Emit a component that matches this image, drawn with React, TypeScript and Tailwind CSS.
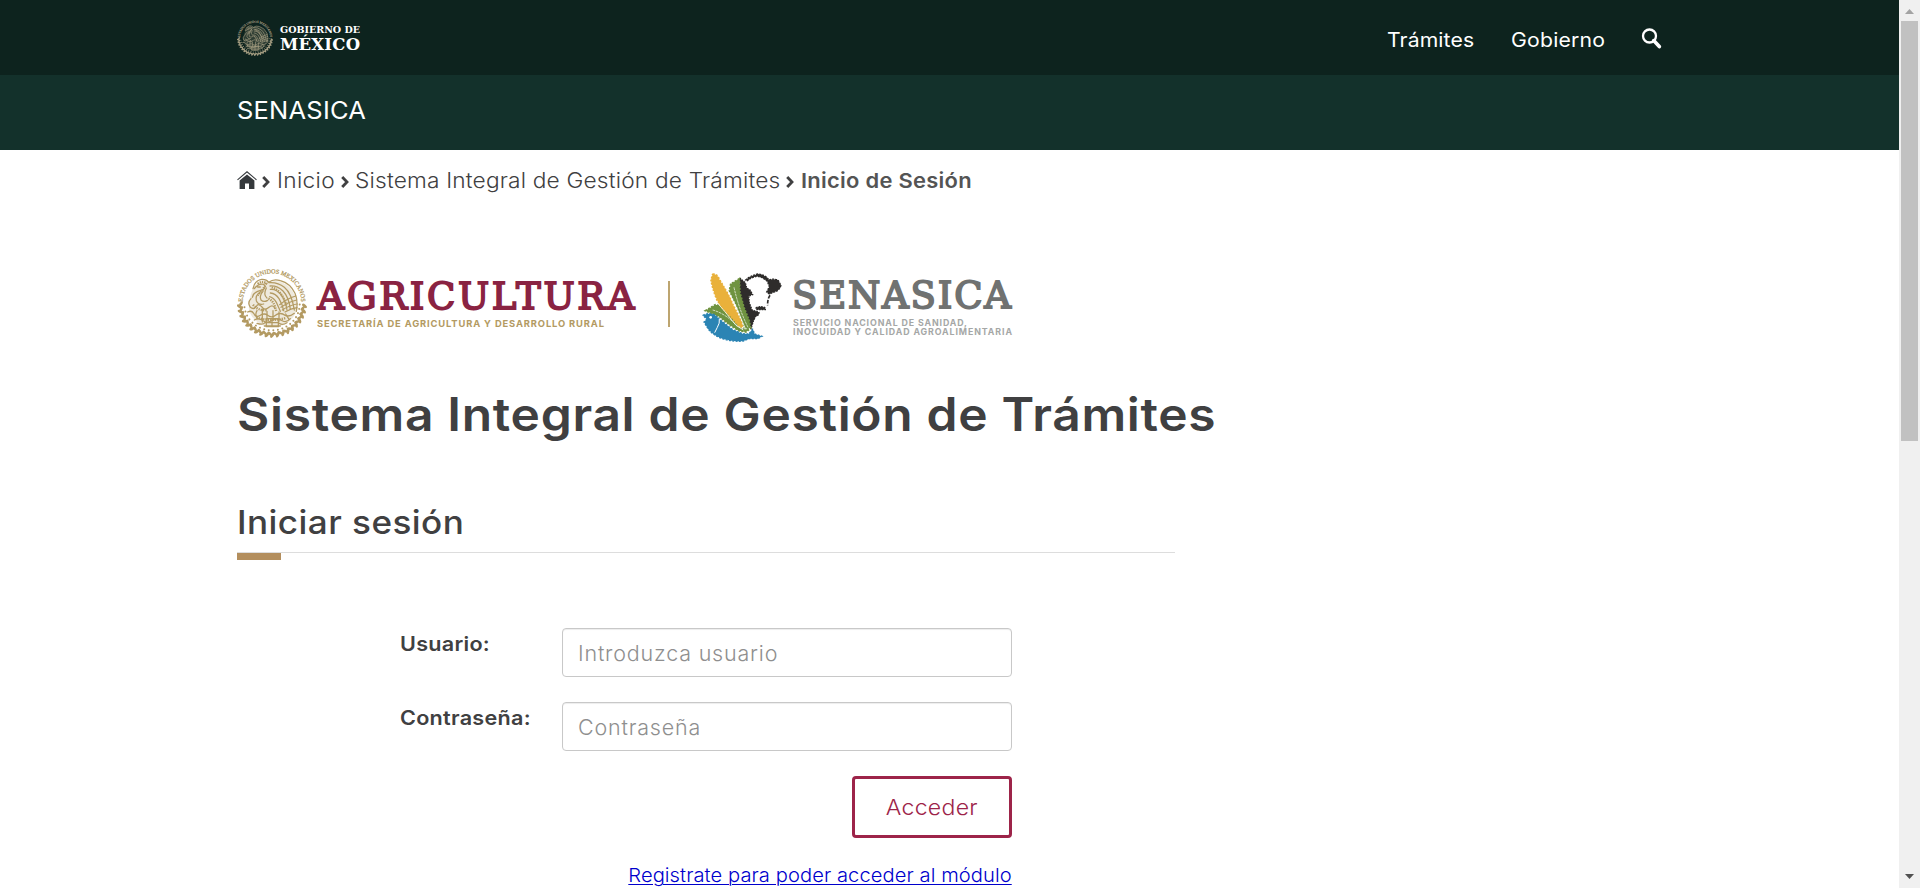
import type { ReactNode } from "react";

function Seal({ className, color, detailed }: { className: string; color: string; detailed?: boolean }) {
  const leaves = Array.from({ length: 19 }, (_, i) => (4 + (172 / 18) * i) * (Math.PI / 180));
  return (
    <svg viewBox="0 0 210 210" className={className} fill="none" stroke={color} aria-hidden="true">
      <defs>
        <path id={detailed ? "ring-lg" : "ring-sm"} d="M18 112 L17 104 A88 88 0 0 1 193 104 L192 112" />
      </defs>
      <text fill={color} stroke={color} strokeWidth="0.8" textAnchor="middle" className="font-['Liberation_Serif'] text-[18.5px]">
        <textPath href={detailed ? "#ring-lg" : "#ring-sm"} startOffset="50%">
          ESTADOS UNIDOS MEXICANOS
        </textPath>
      </text>
      {leaves.map((a, i) => {
        const x = 105 + 92 * Math.cos(a);
        const y = 108 + 88 * Math.sin(a);
        const deg = (a * 180) / Math.PI;
        return (
          <g key={i} transform={`translate(${x} ${y}) rotate(${deg})`} fill={color} stroke="none">
            <ellipse cx="4" cy="-4" rx="9" ry="4.6" transform="rotate(35)" />
            <ellipse cx="-4" cy="5" rx="9" ry="4" transform="rotate(-50)" />
            <circle cx="-9" cy="-4" r="3" />
          </g>
        );
      })}
      <path
        d="M48 62 Q60 34 95 43 Q130 30 160 60 Q184 90 178 130 Q160 176 105 178 Q56 174 36 130 Q34 90 48 62 Z"
        fill={color}
        fillOpacity="0.22"
        stroke="none"
      />
      <g strokeWidth="3.8" strokeLinecap="round">
        <path d="M48 62 Q52 38 74 34 Q88 33 95 43 Q110 31 130 38 Q160 46 174 76 Q184 100 178 130" />
        <path d="M97 44 Q122 42 142 58 Q164 76 172 126" />
        <path d="M99 54 Q120 52 138 69 Q156 88 160 124" />
        <path d="M100 64 Q118 62 132 80 Q146 98 150 126" />
        <path d="M100 75 Q116 76 126 92 Q136 108 140 128" />
        <path d="M98 86 Q111 90 118 103 L130 130" />
        <path d="M128 110 Q150 92 176 84 M132 118 Q154 102 179 96 M136 126 Q156 112 180 108 M144 132 Q162 122 180 119" />
        <path d="M52 62 Q64 46 80 49 Q88 56 80 64 L62 70 Q50 74 46 88 M62 57 h8" />
        <path d="M70 72 Q54 82 58 98 Q64 112 80 108 M78 70 Q66 84 72 96 Q80 104 92 97 M88 60 Q78 80 90 90" />
        <path d="M42 92 Q30 104 40 118 Q50 126 58 116 Q62 104 74 116 Q82 130 96 118 Q108 108 114 122" />
        <path d="M32 132 Q44 126 50 136 Q56 150 70 142 Q82 134 92 142 Q104 152 118 140 Q132 132 144 142 Q158 148 172 136" />
        <path d="M60 128 Q52 142 62 152 M76 124 V162 M90 130 V158 M108 128 V156 M126 132 V160 M146 138 L156 154" />
        <path d="M52 156 Q66 148 78 158 Q92 168 106 156 Q122 148 136 158 Q148 166 160 152" />
        <path d="M60 166 Q78 172 84 164 H124 Q134 174 150 164 M82 174 H130 M88 152 h36 v24 h-36 z M105 152 v24" />
      </g>
      <g strokeWidth="7" strokeDasharray="4 3">
        <path d="M62 48 Q76 36 88 46 Q78 68 62 82" />
        <path d="M104 58 Q134 66 148 112" />
        <path d="M94 92 Q112 98 118 132" />
        <path d="M48 110 Q64 130 92 126" />
        <path d="M58 148 Q100 162 146 150" />
      </g>
    </svg>
  );
}

function SenasicaMark() {
  return (
    <svg viewBox="0 0 330 270" className="h-[90px] w-[110px]" aria-hidden="true">
      {/* cow */}
      <g fill="#2e2c2b" stroke="#2e2c2b">
        <path strokeWidth="4" strokeDasharray="5 3" d="M149 54 L166 68 L170 84 L180 90 L188 104 L176 108 L178 128 L186 150 L207 157 L206 164 L196 170 L190 184 L183 206 L172 186 L160 148 L148 98 Z" />
        <path strokeWidth="4" strokeDasharray="6 3" d="M167 60 Q178 48 204 42 Q226 44 237 60 Q248 55 264 60 L273 76 Q268 93 252 96 L238 102 L230 96 L238 80 L232 64 Q216 50 200 49 Q184 52 172 62 Z" />
        <path strokeWidth="4" strokeDasharray="5 3" d="M198 144 Q212 136 226 144 L226 149 H200 Z" />
        <path fill="none" strokeWidth="5" strokeDasharray="11 4" d="M240 106 Q232 118 233 136" />
      </g>
      {/* leaves */}
      <g fill="#6f9340" stroke="#6f9340" strokeWidth="5" strokeDasharray="6 4">
        <path d="M148 56 L122 72 L118 92 L140 138 L164 204 L182 204 L178 182 L162 142 L150 98 Z" />
        <path d="M46 152 L76 134 L98 138 L120 164 L152 204 L178 208 L168 216 L146 212 L118 194 L88 170 Z" />
      </g>
      <path d="M132 82 Q146 146 174 202 M68 150 Q104 160 136 192 Q150 206 170 207" fill="none" stroke="#fff" strokeWidth="2" strokeDasharray="8 2" />
      {/* corn */}
      <path d="M68 43 Q80 40 87 56 L106 88 Q120 110 128 132 L154 184 L158 202 L146 198 L124 172 Q92 144 80 118 Q66 82 63 60 Z" fill="#e9b13b" stroke="#e9b13b" strokeWidth="5" strokeDasharray="6 4" />
      <path d="M114 94 L140 144 L166 206 M80 126 L104 154 L138 196 L160 210" fill="none" stroke="#fff" strokeWidth="2.4" />
      {/* fish */}
      <path d="M39 166 Q52 158 72 163 L94 182 L128 209 L158 221 L176 222 L188 208 L194 222 L216 229 L204 236 L178 236 L160 243 Q132 246 104 238 Q70 228 54 206 L42 186 L50 178 Z" fill="#2b84b4" stroke="#2b84b4" strokeWidth="4" strokeDasharray="6 4" />
      <path d="M88 176 Q90 190 82 202 L74 218" fill="none" stroke="#fff" strokeWidth="3" />
      <circle cx="62" cy="172" r="4" fill="#fff" />
    </svg>
  );
}

function Chevron() {
  return (
    <svg viewBox="0 0 8 12" className="mt-[2px] h-3 w-2 shrink-0" fill="none" stroke="#404041" strokeWidth="2.8" aria-hidden="true">
      <path d="M1.2 1 L6 6 L1.2 11" />
    </svg>
  );
}

function Label({ children }: { children: ReactNode }) {
  return (
    <label className="w-[162px] origin-left scale-x-[1.08] pt-[4px] text-[20px] leading-[25px] font-semibold tracking-[0.25px] text-[#404041]">
      {children}
    </label>
  );
}

const inputStyle =
  "h-[49px] w-[450px] rounded-[4px] border border-[#c8c8c8] bg-white px-[15px] text-[21.5px] font-light tracking-[0.8px] text-[#555] shadow-[inset_0_1px_1px_rgba(0,0,0,0.075)] outline-none placeholder:text-[#8f8f8f]";

export default function App() {
  return (
    <div className="flex h-[888px] w-full overflow-hidden bg-white font-['Inter','Liberation_Sans',sans-serif] text-[#404041]">
      <div className="min-w-0 flex-1">
        <header className="flex h-[75px] items-center bg-[#0d231e] pl-[237px] text-white">
          <Seal className="h-9 w-9 overflow-visible" color="#a39c80" />
          <svg viewBox="0 0 82 36" className="ml-[6px] h-9 w-[82px]" fill="#fff">
            <text x="1" y="12.6" textLength="80" lengthAdjust="spacingAndGlyphs" className="font-['DejaVu_Serif'] text-[9.6px] font-bold">GOBIERNO DE</text>
            <text x="1" y="29.5" textLength="80" lengthAdjust="spacing" className="font-['DejaVu_Serif'] text-[16.5px] font-bold">MÉXICO</text>
          </svg>
          <nav className="ml-auto flex h-full shrink-0 items-center pr-[236px] pt-[5px] text-[20px]">
            <a className="block w-[124px] shrink-0"><span className="inline-block origin-left scale-x-[1.06] whitespace-nowrap tracking-[0.1px]">Trámites</span></a>
            <a className="block w-[130px] shrink-0"><span className="inline-block origin-left scale-x-[1.06] whitespace-nowrap tracking-[0.2px]">Gobierno</span></a>
            <svg viewBox="0 0 20 21" className="mr-px mb-[4px] h-[21px] w-[21px]" fill="none" stroke="#fff" aria-hidden="true">
              <circle cx="8" cy="8" r="6.5" strokeWidth="2.3" />
              <path d="M12.2 12.6 L17.8 18.6" strokeWidth="3.6" strokeLinecap="round" />
            </svg>
          </nav>
        </header>

        <div className="flex h-[75px] items-center bg-[#13312b] pb-[5px] pl-[237px] text-[24.5px] text-white">
          <span className="origin-left scale-x-[1.04] tracking-[0.22px]">SENASICA</span>
        </div>

        <nav className="flex h-[61px] items-center pl-[237px] text-[21px] font-light whitespace-nowrap">
          <svg viewBox="0 0 20 18" className="mr-[5px] mb-px h-[18px] w-5 shrink-0" fill="#35393c" aria-hidden="true">
            <path d="M10 3.4 L17.4 9.4 V18 H12 V12.5 H8 V18 H2.6 V9.4 Z" />
            <path d="M0.5 8.8 L10 0.8 L19.5 8.8" fill="none" stroke="#35393c" strokeWidth="1.1" />
          </svg>
          <Chevron />
          <span className="ml-[7px] block w-[64px] shrink-0"><span className="inline-block origin-left scale-x-[1.08] tracking-[0.3px]">Inicio</span></span>
          <Chevron />
          <span className="ml-[6px] block w-[431px] shrink-0"><span className="inline-block origin-left scale-x-[1.08] tracking-[0.17px]">Sistema Integral de Gestión de Trámites</span></span>
          <Chevron />
          <span className="ml-[7px] inline-block origin-left scale-x-[1.07] pt-[2px] text-[20.5px] font-semibold tracking-[0.25px] text-[#545454]">Inicio de Sesión</span>
        </nav>

        <section className="mt-[44px] flex h-[100px] items-start pl-[237px]">
          <Seal className="mt-[13px] h-[70px] w-[70px] overflow-visible" color="#b39a62" detailed />
          <svg viewBox="0 0 330 100" className="ml-[7px] h-[100px] w-[330px]">
            <text x="3.5" y="54" textLength="317" lengthAdjust="spacing" fill="#8a2342" stroke="#8a2342" strokeWidth="1.8" className="font-['DejaVu_Serif'] text-[37px]">AGRICULTURA</text>
            <text x="3" y="71.8" textLength="287" lengthAdjust="spacing" fill="#b39a62" className="font-['Inter'] text-[9.4px] font-bold">SECRETARÍA DE AGRICULTURA Y DESARROLLO RURAL</text>
          </svg>
          <div className="mt-[26px] ml-[24px] h-[46px] w-[2px] bg-[#bda570]" />
          <div className="mt-[5px] ml-[20px]"><SenasicaMark /></div>
          <svg viewBox="0 0 230 100" className="-ml-[10px] h-[100px] w-[230px]">
            <text x="2" y="53.2" textLength="219" lengthAdjust="spacing" fill="#707271" stroke="#707271" strokeWidth="1.8" className="font-['DejaVu_Serif'] text-[37px]">SENASICA</text>
            <text x="3" y="70.5" textLength="174" lengthAdjust="spacing" fill="#a5a7a6" className="font-['Inter'] text-[8.8px] font-bold">SERVICIO NACIONAL DE SANIDAD,</text>
            <text x="3" y="80.4" textLength="219" lengthAdjust="spacing" fill="#a5a7a6" className="font-['Inter'] text-[8.8px] font-bold">INOCUIDAD Y CALIDAD AGROALIMENTARIA</text>
          </svg>
        </section>

        <main className="pl-[237px]">
          <h1 className="mt-[30px] origin-left scale-x-[1.08] text-[46px] leading-[58px] font-semibold tracking-[0.64px] whitespace-nowrap">
            Sistema Integral de Gestión de Trámites
          </h1>

          <div className="mt-[59px] w-[938px] border-b border-[#dddddd]">
            <h2 className="h-[50px] origin-left scale-x-[1.08] pt-[1px] text-[32.5px] leading-[40px] font-medium tracking-[0.41px] whitespace-nowrap">
              Iniciar sesión
            </h2>
          </div>
          <div className="h-[7px] w-[44px] bg-[#b38e5d]" />

          <form className="mt-[68px] w-[775px] pl-[163px]">
            <div className="flex">
              <Label>Usuario:</Label>
              <input className={inputStyle} placeholder="Introduzca usuario" />
            </div>
            <div className="mt-[25px] flex">
              <Label>Contraseña:</Label>
              <input type="password" className={inputStyle} placeholder="Contraseña" />
            </div>
            <div className="mt-[25px] flex justify-end">
              <button type="button" className="h-[62px] w-[160px] rounded-[4px] border-[3px] border-[#9d2449] bg-white text-[22px] font-light text-[#9d2449]">
                <span className="inline-block scale-x-[1.05] tracking-[0.25px]">Acceder</span>
              </button>
            </div>
            <div className="mt-[25px] flex justify-end">
              <a className="origin-right scale-x-[1.06] text-[19px] leading-[26px] font-light tracking-[0.07px] whitespace-nowrap text-[#0000cc] underline decoration-1 underline-offset-2">
                Registrate para poder acceder al módulo
              </a>
            </div>
          </form>
        </main>
      </div>

      <div className="flex h-full w-[21px] shrink-0 flex-col items-center bg-[#f0f0f0]">
        <svg viewBox="0 0 21 21" className="h-[21px] w-[21px] shrink-0" fill="#a3a3a3" aria-hidden="true"><path d="M10.5 9 L15 14 H6 Z" /></svg>
        <div className="h-[420px] w-[17px] bg-[#c1c1c1]" />
        <svg viewBox="0 0 21 21" className="mt-auto h-[21px] w-[21px] shrink-0" fill="#505050" aria-hidden="true"><path d="M10.5 12 L15 7 H6 Z" /></svg>
      </div>
    </div>
  );
}
